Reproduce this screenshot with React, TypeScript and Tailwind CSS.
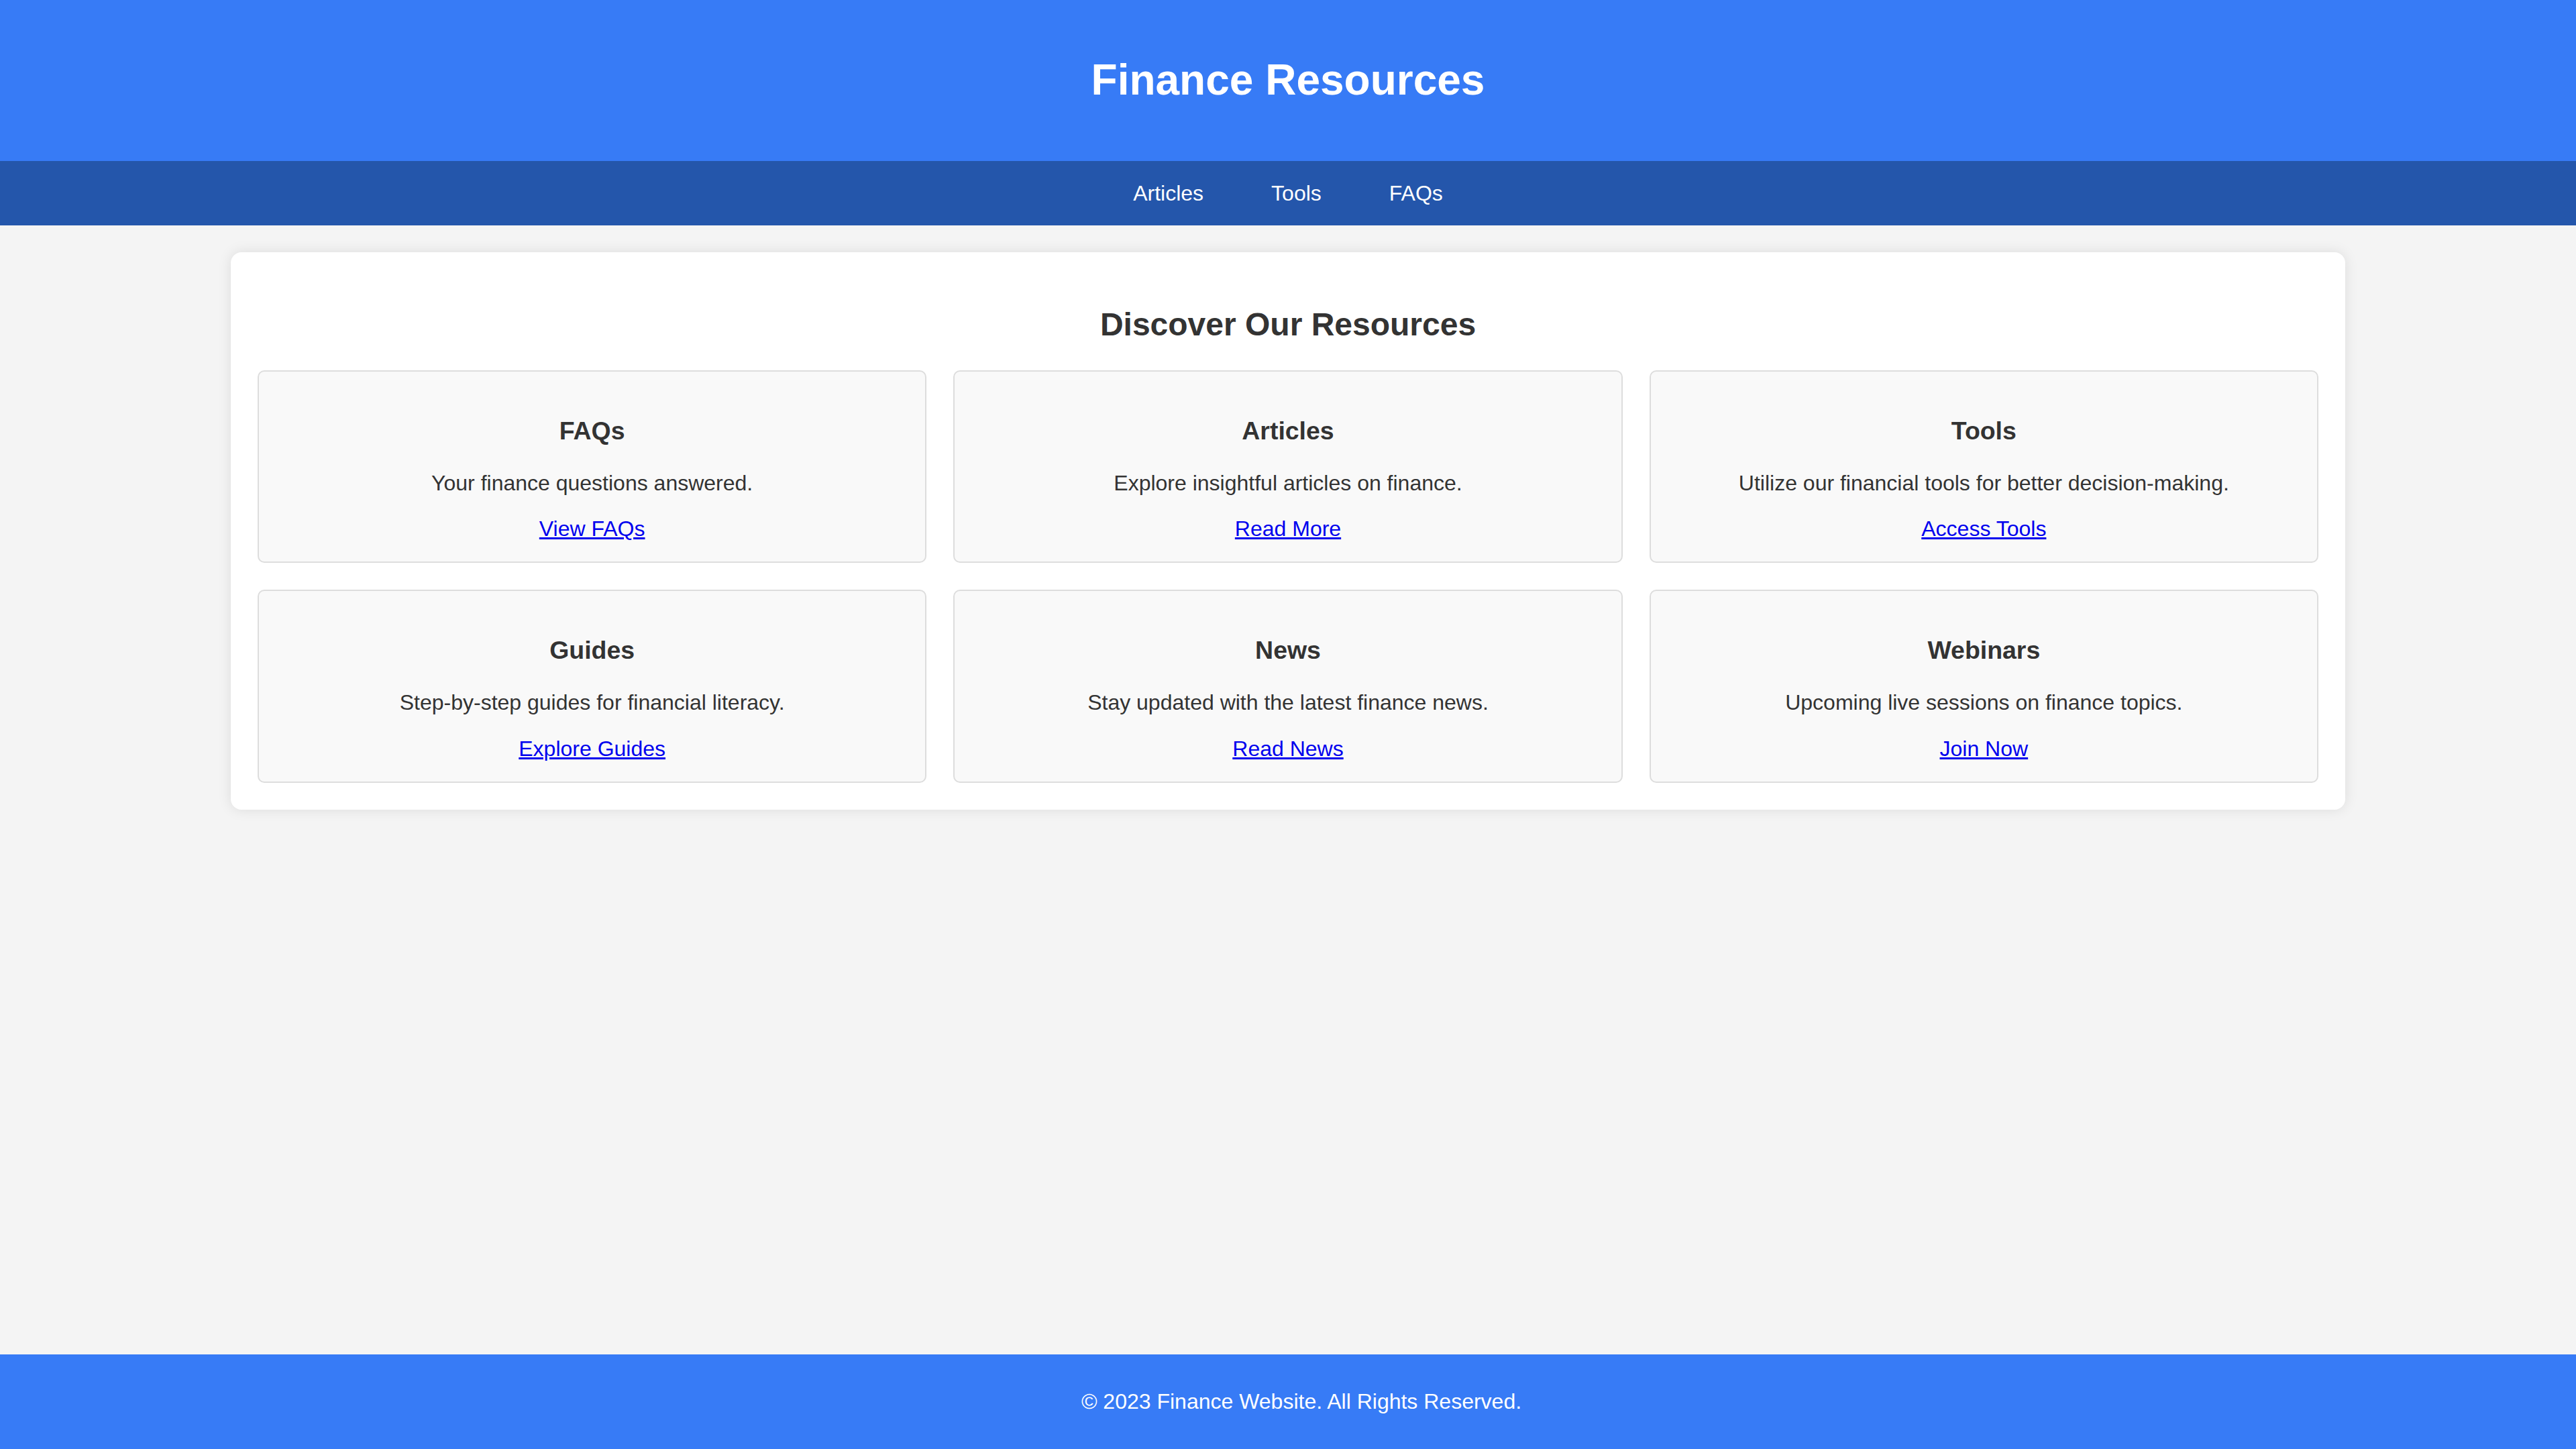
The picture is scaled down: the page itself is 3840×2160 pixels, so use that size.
import React from 'react';

type Resource = {
  title: string;
  text: string;
  link: string;
};

const resources: Resource[] = [
  { title: 'FAQs', text: 'Your finance questions answered.', link: 'View FAQs' },
  { title: 'Articles', text: 'Explore insightful articles on finance.', link: 'Read More' },
  { title: 'Tools', text: 'Utilize our financial tools for better decision-making.', link: 'Access Tools' },
  { title: 'Guides', text: 'Step-by-step guides for financial literacy.', link: 'Explore Guides' },
  { title: 'News', text: 'Stay updated with the latest finance news.', link: 'Read News' },
  { title: 'Webinars', text: 'Upcoming live sessions on finance topics.', link: 'Join Now' },
];

const navLinks = ['Articles', 'Tools', 'FAQs'];

export default function App() {
  return (
    <div className="min-h-screen flex flex-col bg-[#f4f4f4] text-[#333] font-['Liberation_Sans',Arial,sans-serif] leading-[1.15]">
      <header className="bg-[#377bf6] text-white text-center py-[40px]">
        <h1 className="text-[64px] font-bold my-[43px] leading-[1.15]">Finance Resources</h1>
      </header>

      <nav className="bg-[#2456ab] py-[30px] flex justify-center gap-[101px]">
        {navLinks.map((l) => (
          <a key={l} href="#" className="text-white text-[32px] leading-[1.15] no-underline">
            {l}
          </a>
        ))}
      </nav>

      <main className="w-[3152px] mx-auto mt-[40px] mb-[40px] p-[40px] bg-white rounded-[16px] shadow-[0_0_20px_rgba(0,0,0,0.1)]">
        <h2 className="text-[48px] font-bold text-center my-[40px] leading-[1.15]">Discover Our Resources</h2>
        <div className="grid grid-cols-3 gap-[40px]">
          {resources.map((r) => (
            <div
              key={r.title}
              className="bg-[#f9f9f9] border-2 border-[#ddd] rounded-[10px] pt-[30px] pb-[30px] px-[30px] text-center"
            >
              <h3 className="text-[37.44px] font-bold mt-[37px] mb-[38px] leading-[1.15]">{r.title}</h3>
              <p className="text-[32px] mb-[32px] leading-[1.15]">{r.text}</p>
              <a href="#" className="text-[32px] text-[#0000ee] underline leading-[1.15]">
                {r.link}
              </a>
            </div>
          ))}
        </div>
      </main>

      <footer className="mt-auto bg-[#377bf6] text-white text-center py-[20px] pl-[40px]">
        <p className="text-[32px] my-[32px] leading-[1.15]">&copy; 2023 Finance Website. All Rights Reserved.</p>
      </footer>
    </div>
  );
}
